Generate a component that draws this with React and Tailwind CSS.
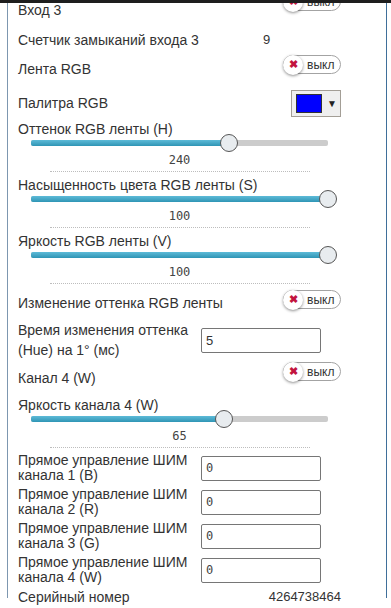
import React from "react"

const font = { fontFamily: '"Liberation Sans", Arial, sans-serif' }

function Toggle() {
  return (
    <div className="relative flex h-[19px] w-[58px] items-center rounded-full border border-[#a3a3a3] bg-white">
      <div className="absolute -left-[1px] top-1/2 flex h-[20px] w-[20px] -translate-y-1/2 items-center justify-center rounded-full bg-white shadow-[0_1px_3px_rgba(0,0,0,0.45)]">
        <span className="text-[11px] leading-none font-bold text-[#c2143f]">✖</span>
      </div>
      <span className="ml-[23px] text-[12px] leading-none text-[#333]">выкл</span>
    </div>
  )
}

function ToggleRow({ label, toggleMt, labelPt }) {
  return (
    <div className="flex items-start">
      <div className={`w-[265px] text-[14px] leading-5 ${labelPt}`}>{label}</div>
      <div className={toggleMt}>
        <Toggle />
      </div>
    </div>
  )
}

function Slider({ label, value, max, pt }) {
  const pct = (value / max) * 100
  return (
    <div className={pt}>
      <div className="h-4 text-[14px] leading-4">{label}</div>
      <div className="relative mt-[3px] ml-[13px] h-[6px] w-[297px] rounded-[2px] bg-[#cccccc]">
        <div
          className="h-full rounded-[2px] bg-linear-to-b from-[#5dbbd8] to-[#2e95b5]"
          style={{ width: `${pct}%` }}
        />
        <div
          className="absolute top-1/2 h-[18px] w-[18px] -translate-x-1/2 -translate-y-1/2 rounded-full border border-[#555] bg-[#e8ecef]"
          style={{ left: `${pct}%` }}
        />
      </div>
      <div
        className="mt-[6px] h-4 text-center text-[12px] leading-4 text-[#444]"
        style={{ fontFamily: '"DejaVu Sans Mono", monospace' }}
      >
        {value}
      </div>
      <div className="mx-auto mt-[3px] w-[260px] border-b border-dotted border-[#bdbdbd]" />
    </div>
  )
}

function InputRow({ label, value }) {
  return (
    <div className="flex h-[34px] items-center">
      <div className="w-[183px] text-[14px] leading-[15px]">{label}</div>
      <input
        readOnly
        value={value}
        className="h-[25px] w-[120px] rounded-[2px] border border-[#767676] bg-white px-[4px] text-[12px] text-[#444] outline-none"
        style={{ fontFamily: '"DejaVu Sans Mono", monospace' }}
      />
    </div>
  )
}

export default function App() {
  return (
    <div className="relative h-[608px] w-[391px] overflow-hidden bg-white text-[#333]" style={font}>
      <div className="absolute inset-x-0 top-0 z-10 h-[3px] bg-[#1e1e1e]" />
      <div className="ml-[7px] h-full w-[380px] border-r border-l border-r-[#3f6f9a] border-l-[#7d97b0]">
        <div className="-mt-[10px] ml-[10px] w-[323px]">
          <ToggleRow label="Вход 3" toggleMt="mt-[2px]" labelPt="pt-[10px]" />

          <div className="flex pt-[10px] text-[14px] leading-5">
            <div className="w-[245px]">Счетчик замыканий входа 3</div>
            <div className="text-[13px]">9</div>
          </div>

          <ToggleRow label="Лента RGB" toggleMt="mt-[5px]" labelPt="pt-[9px]" />

          <div className="flex items-start">
            <div className="w-[273px] pt-[14px] text-[14px] leading-5">Палитра RGB</div>
            <div className="mt-[11px] flex h-[27px] w-[50px] items-center border border-[#a39e96] bg-[#efefef]">
              <div className="ml-[4px] h-[19px] w-[26px] border border-[#333] bg-[#0000ff]" />
              <span className="ml-[5px] text-[10px] leading-none text-[#222]">▼</span>
            </div>
          </div>

          <Slider label="Оттенок RGB ленты (H)" value={240} max={360} pt="pt-[4px]" />
          <Slider label="Насыщенность цвета RGB ленты (S)" value={100} max={100} pt="pt-[5px]" />
          <Slider label="Яркость RGB ленты (V)" value={100} max={100} pt="pt-[5px]" />

          <ToggleRow label="Изменение оттенка RGB ленты" toggleMt="mt-[6px]" labelPt="pt-[9px]" />

          <div className="mt-[7px] flex items-center">
            <div className="w-[183px] text-[14px] leading-5">
              Время изменения оттенка (Hue) на 1° (мс)
            </div>
            <input
              readOnly
              value="5"
              className="h-[25px] w-[120px] rounded-[2px] border border-[#767676] bg-white px-[4px] text-[13px] text-[#333] outline-none"
              style={font}
            />
          </div>

          <ToggleRow label="Канал 4 (W)" toggleMt="mt-[2px]" labelPt="pt-[8px]" />

          <Slider label="Яркость канала 4 (W)" value={65} max={100} pt="pt-[9px]" />

          <div className="pt-[3px]">
            <InputRow label="Прямое управление ШИМ канала 1 (B)" value="0" />
            <InputRow label="Прямое управление ШИМ канала 2 (R)" value="0" />
            <InputRow label="Прямое управление ШИМ канала 3 (G)" value="0" />
            <InputRow label="Прямое управление ШИМ канала 4 (W)" value="0" />
          </div>

          <div className="flex items-center text-[14px] leading-5">
            <div className="w-[251px]">Серийный номер</div>
            <div className="text-[13px]">4264738464</div>
          </div>
        </div>
      </div>
    </div>
  )
}
